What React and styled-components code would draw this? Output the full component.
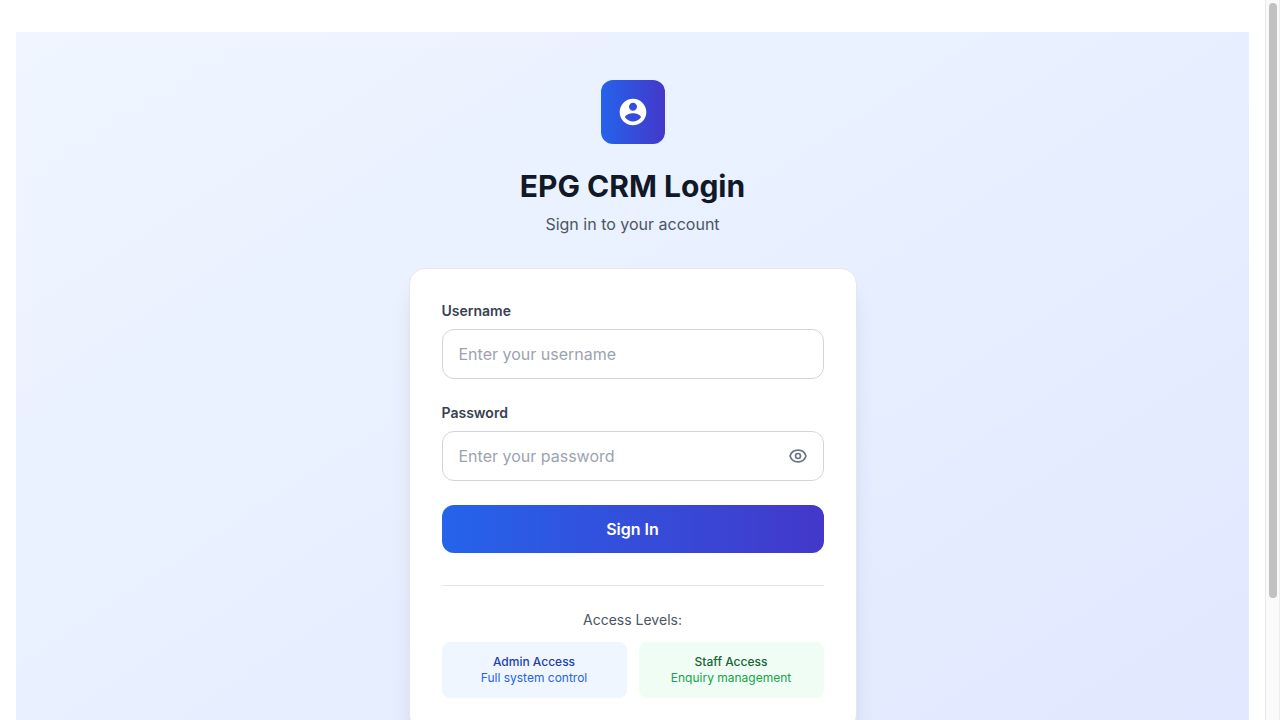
import React, { useState } from "react";
import styled, { createGlobalStyle } from "styled-components";

const GlobalStyle = createGlobalStyle`
  *, *::before, *::after { box-sizing: border-box; }
  body {
    margin: 0;
    background: #fff;
    font-family: Inter, "Liberation Sans", sans-serif;
    font-size: 16px;
    line-height: 24px;
  }
  h1, p { margin: 0; }
`;

const Viewport = styled.div`
  display: flex;
  height: 100vh;
  overflow: hidden;
`;

const Main = styled.main`
  flex: 1;
  padding: 32px 16px;
`;

const Hero = styled.section`
  display: flex;
  flex-direction: column;
  align-items: center;
  min-height: 799px;
  padding: 48px 16px;
  background: linear-gradient(to bottom right, #eff6ff, #e0e7ff);
`;

const Content = styled.div`
  width: 448px;
`;

const Header = styled.header`
  display: flex;
  flex-direction: column;
  align-items: center;
  margin-bottom: 32px;
`;

const LogoTile = styled.div`
  display: flex;
  align-items: center;
  justify-content: center;
  width: 64px;
  height: 64px;
  margin-bottom: 24px;
  border-radius: 12px;
  color: #fff;
  background: linear-gradient(to right, #2563eb, #4338ca);
`;

const Title = styled.h1`
  margin-bottom: 8px;
  color: #111827;
  font-size: 30px;
  font-weight: 700;
  line-height: 36px;
`;

const Subtitle = styled.p`
  color: #4b5563;
`;

const Card = styled.div`
  padding: 32px;
  border: 1px solid #e5e7eb;
  border-radius: 16px;
  background: #fff;
  box-shadow: 0 20px 25px -5px rgba(0, 0, 0, 0.1), 0 8px 10px -6px rgba(0, 0, 0, 0.1);
`;

const Form = styled.form`
  display: flex;
  flex-direction: column;
  gap: 24px;
`;

const Field = styled.div`
  display: flex;
  flex-direction: column;
  gap: 8px;
`;

const Label = styled.label`
  color: #374151;
  font-size: 14px;
  font-weight: 600;
  line-height: 20px;
`;

const InputFrame = styled.div`
  display: flex;
  align-items: center;
  height: 50px;
  padding: 0 16px;
  border: 1px solid #d1d5db;
  border-radius: 12px;
`;

const Input = styled.input`
  flex: 1;
  min-width: 0;
  padding: 0;
  border: 0;
  outline: 0;
  background: transparent;
  color: #111827;
  font: inherit;
  &::placeholder { color: #9ca3af; opacity: 1; }
`;

const IconButton = styled.button`
  display: flex;
  margin-right: -1px;
  padding: 0;
  border: 0;
  background: none;
  color: #6b7280;
  cursor: pointer;
`;

const SubmitButton = styled.button`
  height: 48px;
  padding: 0;
  border: 0;
  border-radius: 12px;
  background: linear-gradient(to right, #2563eb, #4338ca);
  color: #fff;
  font: inherit;
  font-weight: 600;
  cursor: pointer;
`;

const AccessSection = styled.div`
  margin-top: 32px;
  padding-top: 24px;
  border-top: 1px solid #e5e7eb;
`;

const AccessHeading = styled.p`
  margin-bottom: 12px;
  color: #4b5563;
  font-size: 14px;
  line-height: 20px;
  text-align: center;
`;

const AccessGrid = styled.div`
  display: grid;
  grid-template-columns: 1fr 1fr;
  gap: 12px;
`;

const tones = {
  blue: { surface: "#eff6ff", title: "#1e40af", text: "#2563eb" },
  green: { surface: "#f0fdf4", title: "#166534", text: "#16a34a" },
};

const AccessCard = styled.div`
  padding: 12px;
  border-radius: 8px;
  background: ${({ $tone }) => tones[$tone].surface};
  color: ${({ $tone }) => tones[$tone].text};
  font-size: 12px;
  line-height: 16px;
  text-align: center;
`;

const AccessTitle = styled.p`
  color: ${({ $tone }) => tones[$tone].title};
  font-weight: 500;
`;

const ScrollTrack = styled.div`
  flex: none;
  width: 15px;
  padding: 3px 2px 0 3px;
  border-left: 1px solid #e8e8e8;
  border-right: 1px solid #ededed;
  background: #fafafa;
`;

const ScrollThumb = styled.div`
  width: 8px;
  height: 595px;
  border-radius: 4px;
  background: #c1c1c1;
`;

const AccountIcon = () => (
  <svg width="32" height="32" viewBox="0 0 24 24" fill="currentColor">
    <path d="M12 2C6.48 2 2 6.48 2 12s4.48 10 10 10 10-4.48 10-10S17.52 2 12 2zm0 3c1.66 0 3 1.34 3 3s-1.34 3-3 3-3-1.34-3-3 1.34-3 3-3zm0 14.2c-2.5 0-4.71-1.28-6-3.22.03-1.99 4-3.08 6-3.08 1.99 0 5.97 1.09 6 3.08-1.29 1.94-3.5 3.22-6 3.22z" />
  </svg>
);

const EyeIcon = () => (
  <svg width="20" height="20" viewBox="0 0 24 24" fill="none" stroke="currentColor" strokeWidth="2" strokeLinecap="round" strokeLinejoin="round">
    <path d="M15 12a3 3 0 11-6 0 3 3 0 016 0z" />
    <path d="M2.458 12C3.732 7.943 7.523 5 12 5c4.478 0 8.268 2.943 9.542 7-1.274 4.057-5.064 7-9.542 7-4.477 0-8.268-2.943-9.542-7z" />
  </svg>
);

export default function App() {
  const [visible, setVisible] = useState(false);

  return (
    <Viewport>
      <GlobalStyle />
      <Main>
        <Hero>
          <Content>
            <Header>
              <LogoTile><AccountIcon /></LogoTile>
              <Title>EPG CRM Login</Title>
              <Subtitle>Sign in to your account</Subtitle>
            </Header>
            <Card>
              <Form onSubmit={(event) => event.preventDefault()}>
                <Field>
                  <Label htmlFor="username">Username</Label>
                  <InputFrame>
                    <Input id="username" placeholder="Enter your username" />
                  </InputFrame>
                </Field>
                <Field>
                  <Label htmlFor="password">Password</Label>
                  <InputFrame>
                    <Input id="password" type={visible ? "text" : "password"} placeholder="Enter your password" />
                    <IconButton type="button" onClick={() => setVisible(!visible)}>
                      <EyeIcon />
                    </IconButton>
                  </InputFrame>
                </Field>
                <SubmitButton type="submit">Sign In</SubmitButton>
              </Form>
              <AccessSection>
                <AccessHeading>Access Levels:</AccessHeading>
                <AccessGrid>
                  <AccessCard $tone="blue">
                    <AccessTitle $tone="blue">Admin Access</AccessTitle>
                    <p>Full system control</p>
                  </AccessCard>
                  <AccessCard $tone="green">
                    <AccessTitle $tone="green">Staff Access</AccessTitle>
                    <p>Enquiry management</p>
                  </AccessCard>
                </AccessGrid>
              </AccessSection>
            </Card>
          </Content>
        </Hero>
      </Main>
      <ScrollTrack><ScrollThumb /></ScrollTrack>
    </Viewport>
  );
}
